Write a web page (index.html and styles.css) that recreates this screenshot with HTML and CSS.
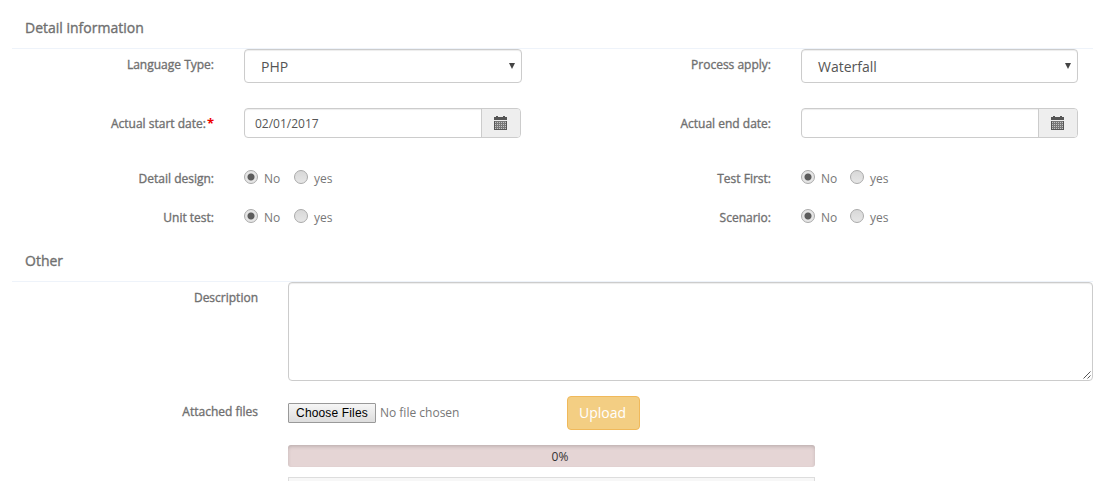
FILE: index.html
```
<!DOCTYPE html>
<html lang="en">
<head>
<meta charset="utf-8">
<title>Detail information</title>
<link rel="stylesheet" href="styles.css">
</head>
<body>
<svg class="defs" width="0" height="0">
  <symbol id="calendar" viewBox="0 0 13 14">
    <path fill="#555" d="M0 1h2V0h2v1h5V0h2v1h2v3H0z"/>
    <path fill="#777" d="M0 5h13v9H0z"/>
    <path stroke="#c4c4c4" stroke-width="1" stroke-dasharray="1 1" d="M1 6.5h11M1 8.5h11M1 10.5h11M1 12.5h11"/>
    <path fill="#555" d="M0 5h1v9H0zM12 5h1v9h-1zM0 13h13v1H0z"/>
  </symbol>
</svg>
<main class="page">
  <section>
    <h2 class="title">Detail information</h2>
    <div class="row row-select">
      <span class="label">Language Type:</span>
      <div class="control select"><span>PHP</span><i class="arrow"></i></div>
      <span class="label">Process apply:</span>
      <div class="control select"><span>Waterfall</span><i class="arrow"></i></div>
    </div>
    <div class="row row-date">
      <span class="label">Actual start date:<b class="required">*</b></span>
      <div class="control date"><span class="date-value">02/01/2017</span><span class="addon"><svg width="13" height="14"><use href="#calendar"/></svg></span></div>
      <span class="label">Actual end date:</span>
      <div class="control date"><span class="date-value"></span><span class="addon"><svg width="13" height="14"><use href="#calendar"/></svg></span></div>
    </div>
    <div class="row row-radio">
      <span class="label">Detail design:</span>
      <div class="radios"><i class="radio checked"></i><span class="first">No</span><i class="radio"></i><span>yes</span></div>
      <span class="label">Test First:</span>
      <div class="radios"><i class="radio checked"></i><span class="first">No</span><i class="radio"></i><span>yes</span></div>
    </div>
    <div class="row row-radio">
      <span class="label">Unit test:</span>
      <div class="radios"><i class="radio checked"></i><span class="first">No</span><i class="radio"></i><span>yes</span></div>
      <span class="label">Scenario:</span>
      <div class="radios"><i class="radio checked"></i><span class="first">No</span><i class="radio"></i><span>yes</span></div>
    </div>
  </section>
  <section>
    <h2 class="title title-other">Other</h2>
    <div class="wide">
      <span class="label">Description</span>
      <div class="textarea"><svg width="8" height="8" viewBox="0 0 8 8"><path d="M0.5 7.5l7-7M4.5 7.5l3-3" stroke="#555" fill="none"/></svg></div>
    </div>
    <div class="wide files">
      <span class="label">Attached files</span>
      <div class="file-line"><button class="choose">Choose Files</button><span class="chosen">No file chosen</span><button class="upload">Upload</button></div>
    </div>
    <div class="progress">0%</div>
    <div class="file-list"></div>
  </section>
</main>
</body>
</html>
```
FILE: styles.css
```
* { box-sizing: border-box; }
body {
  margin: 0;
  height: 481px;
  overflow: hidden;
  background: #fff;
  color: #666;
  font: 12px/17px "Open Sans", sans-serif;
}
.defs { display: none; }
.page { width: 1081px; margin-left: 12px; }
.title {
  height: 49px;
  margin: 0;
  padding: 18px 0 0 13px;
  border-bottom: 1px solid #eef3fa;
  font-size: 14px;
  line-height: 20px;
  font-weight: 400;
  color: #707070;
  -webkit-text-stroke: 0.35px #707070;
}
.row {
  display: grid;
  grid-template-columns: 203px 307px 249px 307px;
  justify-content: start;
}
.row > :nth-child(2) { margin-left: 29px; }
.row > :nth-child(4) { margin-left: 30px; }
.label {
  text-align: right;
  color: #707070;
  -webkit-text-stroke: 0.35px #707070;
  white-space: nowrap;
}
.row > .label:first-child, .wide > .label { padding-right: 1px; }
.required {
  margin-left: 1px;
  color: #e00;
  font-size: 13px;
  line-height: 12px;
  -webkit-text-stroke: 0;
}
.row-select { height: 59px; }
.row-select .label { padding-top: 7px; }
.control {
  display: flex;
  border: 1px solid #ccc;
  border-radius: 4px;
  box-shadow: inset 0 1px 1px rgba(0,0,0,.075);
  color: #555;
}
.select {
  height: 34px;
  padding: 7px 6px 0 16px;
  justify-content: space-between;
  font-size: 14px;
  line-height: 20px;
}
.arrow {
  width: 6px;
  height: 6px;
  margin-top: 6px;
  background: #444;
  clip-path: polygon(0 0, 100% 0, 50% 100%);
}
.row-date { height: 61px; }
.row-date .label { padding-top: 7px; }
.date { width: 277px; height: 30px; overflow: hidden; }
.date-value { flex: 1; padding: 6px 10px; }
.addon {
  width: 39px;
  padding: 7px 0 0 12px;
  border-left: 1px solid #ccc;
  background: #eee;
}
.addon svg { display: block; }
.row-radio { height: 39px; }
.row-radio .label { padding-top: 1px; }
.radios { display: flex; padding-top: 1px; color: #777; }
.radio {
  width: 14px;
  height: 14px;
  border: 1px solid #aaa;
  border-radius: 50%;
  background: linear-gradient(#d8d8d8, #e6e6e6);
}
.checked { background: radial-gradient(circle, #5c5c5c 3px, #e5e5e5 4px); }
.radios span { padding-left: 6px; }
.radios .first { width: 36px; }
.row > .radios:nth-child(4) .first { width: 35px; }
.title-other { height: 35px; padding-top: 4px; }
.wide { display: grid; grid-template-columns: 247px 805px; column-gap: 29px; }
.wide > .label { padding-top: 7px; }
.textarea {
  display: flex;
  height: 99px;
  padding: 0 1px 1px 0;
  align-items: flex-end;
  justify-content: flex-end;
  border: 1px solid #ccc;
  border-radius: 4px;
  box-shadow: inset 0 1px 1px rgba(0,0,0,.075);
}
.files { height: 64px; padding-top: 15px; }
.file-line { display: flex; align-items: flex-start; }
.choose {
  width: 88px;
  height: 20px;
  margin-top: 7px;
  padding: 0;
  border: 1px solid #999;
  border-radius: 1px;
  background: linear-gradient(#f6f6f6, #ddd);
  color: #000;
  font: 12px/17px "Liberation Sans", sans-serif;
  letter-spacing: .15px;
}
.chosen { width: 187px; padding: 8px 0 0 4px; color: #777; }
.upload {
  width: 73px;
  height: 34px;
  margin-left: 4px;
  padding: 0 2px 0 0;
  border: 1px solid #f0b95b;
  border-radius: 4px;
  background: #f3ce83;
  color: #fff;
  font: 14px/20px "Open Sans", sans-serif;
}
.progress {
  width: 527px;
  height: 22px;
  margin-left: 276px;
  border-radius: 3px;
  background: #e5d5d5;
  box-shadow: inset 0 2px 4px -1px rgba(0,0,0,.22);
  color: #333;
  line-height: 23px;
  padding-left: 17px;
  text-align: center;
}
.file-list {
  width: 527px;
  height: 20px;
  margin: 10px 0 0 276px;
  border: 1px solid #ddd;
  background: #f7f7f7;
}
```
